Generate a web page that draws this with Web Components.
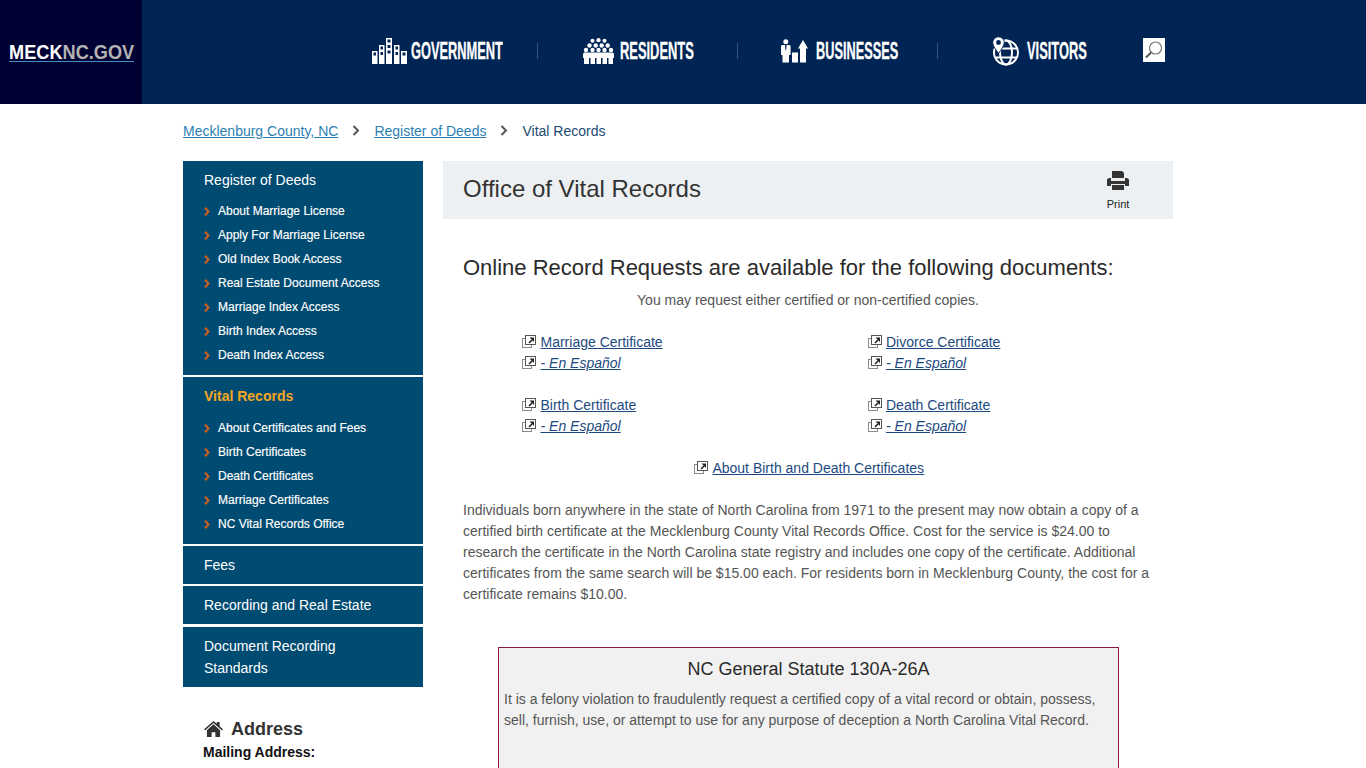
<!DOCTYPE html>
<html lang="en">
<head>
<meta charset="utf-8">
<title>Office of Vital Records</title>
<style>
html, body { margin: 0; padding: 0; background: #fff; height: 768px; overflow: hidden; }
body { font-family: "Liberation Sans", Arial, sans-serif; }
</style>
</head>
<body>
<meck-header></meck-header>
<meck-page>
    <meck-crumbs slot="crumbs"></meck-crumbs>
    <meck-sidebar slot="side"></meck-sidebar>
    <meck-main slot="main"></meck-main>
</meck-page>

<script>
// icons used in the top bar
const towerColumn = (x, w, top) => {
    let out = `<rect x="${x}" y="${top}" width="${w}" height="${26 - top}" fill="#fff"/>`;
    for (let y = top + 1.5; y < 17; y += 5.500) {
        out += `<rect x="${x + 1.500}" y="${y}" width="${w - 3}" height="3" fill="#002554"/>`;
    }
    return out;
};

const ICONS = {
    government: `<svg width="35" height="26" viewBox="0 0 35 26">${towerColumn(0, 5.500, 13)}${towerColumn(7, 5.500, 7)}${towerColumn(14, 6, 0)}${towerColumn(22, 5.500, 7)}${towerColumn(29, 6, 13)}</svg>`,
    residents: `<svg width="31" height="26" viewBox="0 0 31 26" fill="#fff"><circle cx="15.500" cy="2.200" r="2.100"/><circle cx="9.500" cy="2.800" r="2"/><circle cx="21.500" cy="2.800" r="2"/><circle cx="6.500" cy="7.500" r="2.200"/><circle cx="12.700" cy="7.500" r="2.200"/><circle cx="18.700" cy="7.500" r="2.200"/><circle cx="24.700" cy="7.500" r="2.200"/><circle cx="3" cy="12" r="2.200"/><circle cx="9.500" cy="12" r="2.200"/><circle cx="15.500" cy="12" r="2.200"/><circle cx="21.500" cy="12" r="2.200"/><circle cx="28" cy="12" r="2.200"/><path d="M1 14.500h29l1 1.500v4H0v-4zM1 20h5v6H1zM7.500 20h4.500v6H7.500zM13.500 20h4.500v6h-4.500zM19.500 20h4.500v6h-4.500zM25.500 20h4.500v6h-4.500z"/></svg>`,
    businesses: `<svg width="27" height="24" viewBox="0 0 27 24" fill="#fff"><circle cx="4.800" cy="2.700" r="2.500"/><path d="M1 6h7.600l1 1v9H8v7.500H1.500V16H0V7z"/><path d="M4 6h1.600L5.300 10 4.800 12 4.300 10z" fill="#002554"/><path d="M11 13.500h6V23.500h-6z"/><path d="M22 1l5 8.500h-2V23.500h-6V9.500h-2z"/></svg>`,
    visitors: `<svg width="27" height="30" viewBox="0 0 27 30" fill="none" stroke="#fff" stroke-width="2"><circle cx="14" cy="16.500" r="12"/><ellipse cx="14" cy="16.500" rx="6" ry="12"/><path d="M3 21.500h22M8 12.500h18"/><path d="M6.500 .8a5.800 5.800 0 0 1 5.800 5.800c0 3.400-3.400 7.400-5.800 10.800C4.100 14 .7 10 .7 6.600A5.800 5.800 0 0 1 6.500 .8z" fill="#fff" stroke="#002554" stroke-width="1"/><circle cx="6.500" cy="6.500" r="2.400" fill="#002554" stroke="none"/></svg>`
};

const externalIcon = `<svg width="14" height="13" viewBox="0 0 14 13" style="flex:none"><rect x="0.500" y="3.500" width="9" height="9" fill="#fff" stroke="#8a8a8a"/><rect x="3.500" y="0.500" width="10" height="9" fill="#fff" stroke="#555"/><path d="M7 8l3-3" stroke="#222" stroke-width="1.600"/><path d="M7.500 2.500h4.500V7z" fill="#222"/></svg>`;

class MeckHeader extends HTMLElement {
    constructor() {
        super();
        this.attachShadow({ mode: 'open' });
        const navItem = (key, label, iconW, labelW, gap) => `
            <a class="nav-item" style="width:${iconW + gap + labelW}px">
                ${ICONS[key]}
                <span class="nav-wrap" style="width:${labelW}px;margin-left:${gap}px"><span class="nav-label">${label}</span></span>
            </a>`;
        this.shadowRoot.innerHTML = `
            <style>
                :host { display: block; height: 104px; background: #002554; }
                .bar { display: flex; height: 104px; }
                .logo {
                    width: 142px; flex: none; background: #000033;
                    display: flex; align-items: center; justify-content: center;
                    box-sizing: border-box; padding-left: 1px;
                }
                .logo a {
                    display: inline-block; transform: scaleX(.885);
                    font: 700 20.500px "Liberation Sans", Arial, sans-serif;
                    color: #fff; line-height: 18px;
                    border-bottom: 1px solid #3d8fc4;
                }
                .logo span { color: #b4b4b4; }
                .nav {
                    display: grid;
                    grid-template-columns: 165px 1px 199px 1px 199px 1px 205px 56px;
                    margin-left: 230px; align-items: center; height: 104px;
                }
                .nav-item { display: flex; align-items: center; color: #fff; height: 32px; }
                .nav-item svg { flex: none; margin-bottom: 2px; }
                .nav-wrap { display: block; overflow: visible; margin-bottom: 1px; }
                .nav-label {
                    display: inline-block; transform-origin: 0 50%;
                    font: 700 23px "Liberation Sans", Arial, sans-serif;
                    -webkit-text-stroke: 0.300px #fff;
                    transform: scaleX(var(--sx, .62)); white-space: nowrap;
                }
                .sep { width: 1px; height: 16px; background: #2f5280; margin-bottom: 2px; }
                .cell { display: flex; }
                .search {
                    width: 22px; height: 24px; background: #fff;
                    display: flex; align-items: center; justify-content: center;
                    margin-bottom: 4px;
                }
            </style>
            <div class="bar">
                <div class="logo"><a>MECK<span>NC.GOV</span></a></div>
                <nav class="nav">
                    <div class="cell">${navItem('government', 'GOVERNMENT', 35, 92, 4)}</div>
                    <div class="sep"></div>
                    <div class="cell" style="padding-left:45px">${navItem('residents', 'RESIDENTS', 31, 74, 6)}</div>
                    <div class="sep"></div>
                    <div class="cell" style="padding-left:43px">${navItem('businesses', 'BUSINESSES', 27, 82, 8)}</div>
                    <div class="sep"></div>
                    <div class="cell" style="padding-left:54px">${navItem('visitors', 'VISITORS', 27, 60, 8)}</div>
                    <div class="cell">
                        <div class="search">
                            <svg width="20" height="20" viewBox="0 0 20 20" fill="none"><circle cx="11.500" cy="8" r="6" stroke="#777" stroke-width="1.200"/><path d="M7 12.500L2 17.500" stroke="#555" stroke-width="2"/></svg>
                        </div>
                    </div>
                </nav>
            </div>
        `;
    }

    connectedCallback() {
        // squeeze the labels into the width of the condensed face of the original
        const widths = { GOVERNMENT: 92, RESIDENTS: 74, BUSINESSES: 82, VISITORS: 60 };
        this.shadowRoot.querySelectorAll('.nav-label').forEach(el => {
            el.style.setProperty('--sx', widths[el.textContent] / el.offsetWidth);
        });
    }
}

class MeckPage extends HTMLElement {
    constructor() {
        super();
        this.attachShadow({ mode: 'open' });
        this.shadowRoot.innerHTML = `
            <style>
                :host { display: block; width: 990px; margin-left: 183px; }
                .cols { display: grid; grid-template-columns: 240px 730px; column-gap: 20px; }
            </style>
            <slot name="crumbs"></slot>
            <div class="cols">
                <div><slot name="side"></slot></div>
                <div><slot name="main"></slot></div>
            </div>
        `;
    }
}

class MeckCrumbs extends HTMLElement {
    constructor() {
        super();
        this.attachShadow({ mode: 'open' });
        const chev = `<svg class="chev" width="8" height="11" viewBox="0 0 8 11" fill="none"><path d="M1.500 1l4.500 4.500L1.500 10" stroke="#555" stroke-width="2"/></svg>`;
        this.shadowRoot.innerHTML = `
            <style>
                :host {
                    display: flex; align-items: center; height: 53px; padding-bottom: 4px;
                    font: 14px "Liberation Sans", Arial, sans-serif;
                }
                a { color: #2c7fb0; text-decoration: underline; }
                span { color: #1c4a72; }
                .chev { margin: 0 14px 0 14px; }
            </style>
            <a>Mecklenburg County, NC</a>${chev}<a>Register of Deeds</a>${chev}<span>Vital Records</span>
        `;
    }
}

class MeckSideGroup extends HTMLElement {
    constructor() {
        super();
        this.attachShadow({ mode: 'open' });
        this.shadowRoot.innerHTML = `
            <style>
                :host {
                    display: block; background: #004b71; color: #fff;
                    padding: 0 21px; margin-bottom: 2px;
                    font-family: "Liberation Sans", Arial, sans-serif;
                }
                .title { font-size: 14px; line-height: 22px; padding: 8px 0; }
                :host([active]) .title { color: #f5a623; font-weight: 700; padding-bottom: 9px; }
                :host([sub]) { padding-bottom: 8px; }
            </style>
            <div class="title"><slot name="title"></slot></div>
            <slot></slot>
        `;
    }
}

class MeckSideLink extends HTMLElement {
    constructor() {
        super();
        this.attachShadow({ mode: 'open' });
        this.shadowRoot.innerHTML = `
            <style>
                :host {
                    display: flex; align-items: center; height: 24px;
                    font: 12px "Liberation Sans", Arial, sans-serif; color: #fff;
                    -webkit-text-stroke: 0.150px #fff;
                }
                svg { margin-right: 8px; flex: none; }
            </style>
            <svg width="6" height="9" viewBox="0 0 6 9" fill="none"><path d="M1 .8l3.500 3.700L1 8.200" stroke="#d2601a" stroke-width="2"/></svg>
            <slot></slot>
        `;
    }
}

class MeckSidebar extends HTMLElement {
    constructor() {
        super();
        this.attachShadow({ mode: 'open' });
        const links = arr => arr.map(t => `<meck-side-link>${t}</meck-side-link>`).join('');
        this.shadowRoot.innerHTML = `
            <style>
                :host { display: block; font-family: "Liberation Sans", Arial, sans-serif; }
                .addr { padding: 29px 0 0 20px; color: #333; }
                h3 { margin: 0; padding-left: 1px; display: flex; align-items: center; font-size: 18px; line-height: 26px; }
                h3 svg { margin-right: 8px; }
                h4 { margin: 0; font-size: 14px; line-height: 20px; color: #111; }
                p { margin: 3px 0 0; font-size: 12px; line-height: 16px; }
            </style>
            <meck-side-group sub>
                <span slot="title">Register of Deeds</span>
                ${links(['About Marriage License', 'Apply For Marriage License', 'Old Index Book Access', 'Real Estate Document Access', 'Marriage Index Access', 'Birth Index Access', 'Death Index Access'])}
            </meck-side-group>
            <meck-side-group sub active>
                <span slot="title">Vital Records</span>
                ${links(['About Certificates and Fees', 'Birth Certificates', 'Death Certificates', 'Marriage Certificates', 'NC Vital Records Office'])}
            </meck-side-group>
            <meck-side-group><span slot="title">Fees</span></meck-side-group>
            <meck-side-group style="margin-bottom:3px"><span slot="title">Recording and Real Estate</span></meck-side-group>
            <meck-side-group style="margin-bottom:0"><span slot="title">Document Recording Standards</span></meck-side-group>
            <div class="addr">
                <h3><svg width="19" height="16" viewBox="0 0 20 17" fill="#333"><path d="M10 0l3.500 3V1h3v4.600L20 8.800l-1 1.200-9-8-9 8-1-1.200z"/><path d="M10 3.500l7 6.200V17h-5v-5H8v5H3V9.700z"/></svg>Address</h3>
                <h4>Mailing Address:</h4>
                <p>840 N. College St.</p>
            </div>
        `;
    }
}

class MeckLink extends HTMLElement {
    constructor() {
        super();
        this.attachShadow({ mode: 'open' });
        this.shadowRoot.innerHTML = `
            <style>
                :host { display: flex; align-items: center; height: 21px; font: 14px "Liberation Sans", Arial, sans-serif; }
                a { color: #1c4a80; text-decoration: underline; margin-left: 4.500px; }
                :host([es]) a { font-style: italic; }
            </style>
            ${externalIcon}<a><slot></slot></a>
        `;
    }
}

class MeckMain extends HTMLElement {
    constructor() {
        super();
        this.attachShadow({ mode: 'open' });
        this.shadowRoot.innerHTML = `
            <style>
                :host { display: block; font: 14px "Liberation Sans", Arial, sans-serif; color: #555; }
                .head {
                    display: flex; height: 58px; background: #edf0f2;
                    align-items: center; justify-content: space-between;
                    padding: 0 23px 0 20px; box-sizing: border-box;
                }
                h1 { margin: 0 0 2px; font-size: 24px; font-weight: 400; color: #333; }
                .print { width: 64px; display: flex; flex-direction: column; align-items: center; font-size: 11px; color: #222; padding-top: 1px; }
                .print span { margin-top: 8px; }
                h2 { margin: 35px 0 0 20px; font-size: 22px; line-height: 28px; font-weight: 400; color: #2b2b2b; }
                .lead { margin: 8px 0 0; text-align: center; line-height: 20px; }
                .links { display: grid; grid-template-columns: 345.500px 345px; margin: 21px 0 0 79px; row-gap: 21px; }
                .center { display: flex; justify-content: center; margin-top: 21px; padding-left: 2px; }
                .body { margin: 22px 20px 0; line-height: 21px; }
                .statute {
                    margin: 42px 0 0 55px; width: 621px; height: 200px; box-sizing: border-box;
                    border: 1px solid #8c1a3c; background: #f1f1f1; padding: 9px 5px;
                    line-height: 21px;
                }
                .statute h3 { margin: 0 0 8px; text-align: center; font-size: 18px; font-weight: 400; color: #2b2b2b; line-height: 24px; }
                .statute p { margin: 0; }
            </style>
            <div class="head">
                <h1>Office of Vital Records</h1>
                <div class="print">
                    <svg width="22" height="19" viewBox="0 0 22 19" fill="#333"><path d="M5 0h10l2 2v5H5z"/><path d="M2.500 7H4v3h14V7h1.500A2.500 2.500 0 0 1 22 9.500V15h-4v-2H4v2H0V9.500A2.500 2.500 0 0 1 2.500 7z"/><path d="M5 14h12v5H5z"/></svg>
                    <span>Print</span>
                </div>
            </div>
            <h2>Online Record Requests are available for the following documents:</h2>
            <p class="lead">You may request either certified or non-certified copies.</p>
            <div class="links">
                <div><meck-link>Marriage Certificate</meck-link><meck-link es>- En Español</meck-link></div>
                <div><meck-link>Divorce Certificate</meck-link><meck-link es>- En Español</meck-link></div>
                <div><meck-link>Birth Certificate</meck-link><meck-link es>- En Español</meck-link></div>
                <div><meck-link>Death Certificate</meck-link><meck-link es>- En Español</meck-link></div>
            </div>
            <div class="center"><meck-link>About Birth and Death Certificates</meck-link></div>
            <p class="body">Individuals born anywhere in the state of North Carolina from 1971 to the present may now obtain a copy of a certified birth certificate at the Mecklenburg County Vital Records Office. Cost for the service is $24.00 to research the certificate in the North Carolina state registry and includes one copy of the certificate. Additional certificates from the same search will be $15.00 each. For residents born in Mecklenburg County, the cost for a certificate remains $10.00.</p>
            <div class="statute">
                <h3>NC General Statute 130A-26A</h3>
                <p>It is a felony violation to fraudulently request a certified copy of a vital record or obtain, possess, sell, furnish, use, or attempt to use for any purpose of deception a North Carolina Vital Record.</p>
            </div>
        `;
    }
}

customElements.define('meck-side-link', MeckSideLink);
customElements.define('meck-side-group', MeckSideGroup);
customElements.define('meck-sidebar', MeckSidebar);
customElements.define('meck-link', MeckLink);
customElements.define('meck-crumbs', MeckCrumbs);
customElements.define('meck-main', MeckMain);
customElements.define('meck-page', MeckPage);
customElements.define('meck-header', MeckHeader);
</script>
</body>
</html>
